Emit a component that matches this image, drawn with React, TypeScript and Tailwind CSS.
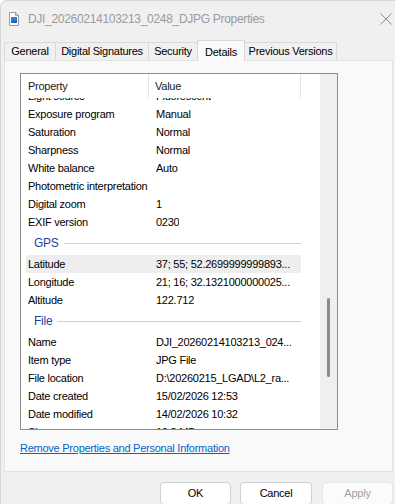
const tabs = [
  { label: 'General', w: 'w-[52px]' },
  { label: 'Digital Signatures', w: 'w-[94px]' },
  { label: 'Security', w: 'w-[50px]' },
  { label: 'Details', w: 'w-[48px]', active: true },
  { label: 'Previous Versions', w: 'w-[93px]' },
]

type Item =
  | { kind: 'row'; name: string; value: string; selected?: boolean }
  | { kind: 'group'; name: string }

const items: Item[] = [
  { kind: 'row', name: 'Light source', value: 'Fluorescent' },
  { kind: 'row', name: 'Exposure program', value: 'Manual' },
  { kind: 'row', name: 'Saturation', value: 'Normal' },
  { kind: 'row', name: 'Sharpness', value: 'Normal' },
  { kind: 'row', name: 'White balance', value: 'Auto' },
  { kind: 'row', name: 'Photometric interpretation', value: '' },
  { kind: 'row', name: 'Digital zoom', value: '1' },
  { kind: 'row', name: 'EXIF version', value: '0230' },
  { kind: 'group', name: 'GPS' },
  { kind: 'row', name: 'Latitude', value: '37; 55; 52.2699999999893...', selected: true },
  { kind: 'row', name: 'Longitude', value: '21; 16; 32.1321000000025...' },
  { kind: 'row', name: 'Altitude', value: '122.712' },
  { kind: 'group', name: 'File' },
  { kind: 'row', name: 'Name', value: 'DJI_20260214103213_024...' },
  { kind: 'row', name: 'Item type', value: 'JPG File' },
  { kind: 'row', name: 'File location', value: 'D:\\20260215_LGAD\\L2_ra...' },
  { kind: 'row', name: 'Date created', value: '15/02/2026 12:53' },
  { kind: 'row', name: 'Date modified', value: '14/02/2026 10:32' },
  { kind: 'row', name: 'Size', value: '10.8 MB' },
]

function FileIcon() {
  return (
    <svg width="12" height="14" viewBox="0 0 12 14">
      <path d="M1.5 0.5h6l3 3v10h-9z" fill="#ffffff" stroke="#9a9a9a" />
      <path d="M7.5 0.5v3h3" fill="none" stroke="#9a9a9a" />
      <rect x="3" y="5" width="6" height="6" fill="#2f7fd6" />
      <path d="M3 11l2.5-3 1.5 1.5 2-2.5v4z" fill="#1b5fae" />
    </svg>
  )
}

export default function App() {
  return (
    <div className="w-[395px] h-[504px] overflow-hidden bg-[#f0f0f0] border-t border-l border-[#d6d6d6] rounded-tl-[7px] font-['Liberation_Sans',Arial,sans-serif] text-[11px] tracking-[-0.25px] text-black">
      {/* Title bar */}
      <div className="h-[35px] flex items-center pl-[7px]">
        <FileIcon />
        <span className="ml-[8px] text-[12px] tracking-[-0.3px] text-[#9b9b9b]">
          DJI_20260214103213_0248_DJPG Properties
        </span>
        <svg className="ml-auto mr-[3px]" width="12" height="12" viewBox="0 0 12 12">
          <path d="M0.5 0.5l11 11M11.5 0.5l-11 11" stroke="#8a8a8a" strokeWidth="1" />
        </svg>
      </div>

      {/* Tabs */}
      <div className="relative z-10 h-[25px] flex items-end pl-[3px]">
        {tabs.map((t, i) =>
          t.active ? (
            <div
              key={t.label}
              className={`${t.w} h-[21px] -ml-px flex items-start pt-[3px] justify-center bg-[#f9f9f9] border-t border-l border-r border-[#d9d9d9]`}
            >
              {t.label}
            </div>
          ) : (
            <div
              key={t.label}
              className={`${t.w} h-[18px] mb-px ${i === 0 ? '' : '-ml-px'} flex items-center justify-center bg-[#f0f0f0] border-t border-l border-r border-[#d9d9d9]`}
            >
              {t.label}
            </div>
          )
        )}
      </div>

      {/* Panel */}
      <div className="-mt-px ml-[3px] w-[389px] h-[412px] border border-[#e3e3e3] bg-[#f9f9f9] pt-[12px] pl-[15px]">
        <div className="w-[318px] h-[357px] border border-[#8c8c8c] bg-white flex overflow-hidden">
          <div className="w-[299px] flex flex-col">
            {/* Header */}
            <div className="h-[24px] flex shrink-0 bg-white relative z-10 text-[#1a1a1a]">
              <div className="w-[128px] pl-[7px] flex items-center border-r border-[#e5e5e5]">Property</div>
              <div className="w-[152px] pl-[6px] flex items-center border-r border-[#e5e5e5]">Value</div>
            </div>
            {/* Rows */}
            <div className="flex-1 overflow-hidden">
              <div className="-mt-[11px]">
                {items.map((it) =>
                  it.kind === 'group' ? (
                    <div key={it.name} className="ml-[5px] w-[275px] h-[24px] flex items-center pl-[8px]">
                      <span className="text-[#1f3fa0] text-[12px]">{it.name}</span>
                      <div className="flex-1 h-px bg-[#c8d2e6] ml-[5px]" />
                    </div>
                  ) : (
                    <div
                      key={it.name}
                      className={`ml-[5px] w-[275px] h-[18px] flex items-center whitespace-nowrap ${it.selected ? 'bg-[#eeeeee]' : ''}`}
                    >
                      <span className="w-[130px] pl-[2px] shrink-0">{it.name}</span>
                      <span className="overflow-hidden">{it.value}</span>
                    </div>
                  )
                )}
              </div>
            </div>
          </div>
          {/* Scrollbar */}
          <div className="w-[17px] bg-[#efefef] pt-[224px] pl-[7px]">
            <div className="w-[3px] h-[79px] rounded-full bg-[#8b8b8b]" />
          </div>
        </div>
        <div className="mt-[11px] leading-[14px]">
          <span className="text-[#0066cc] underline">Remove Properties and Personal Information</span>
        </div>
      </div>

      {/* Buttons */}
      <div className="mt-[10px] flex pl-[159px] gap-[9px]">
        <button className="w-[71px] h-[23px] bg-white border border-[#d0d0d0] rounded-[4px]">OK</button>
        <button className="w-[72px] h-[23px] bg-white border border-[#d0d0d0] rounded-[4px]">Cancel</button>
        <button className="ml-px w-[71px] h-[23px] bg-[#fbfbfb] border border-[#e5e5e5] rounded-[4px] text-[#a0a0a0]">Apply</button>
      </div>
    </div>
  )
}
